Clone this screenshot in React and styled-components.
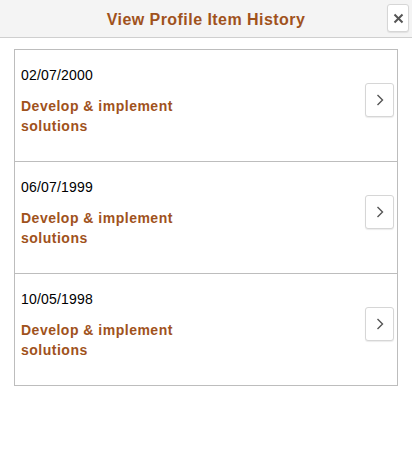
import React from 'react';
import styled, { createGlobalStyle } from 'styled-components';

const GlobalStyle = createGlobalStyle`
  html, body {
    margin: 0;
    padding: 0;
    background: #fff;
    font-family: Arial, "Liberation Sans", sans-serif;
  }
`;

const Page = styled.div`
  width: 412px;
  min-height: 462px;
  background: #fff;
`;

const Header = styled.header`
  position: relative;
  height: 38px;
  padding-top: 2px;
  background: #f4f4f4;
  border-bottom: 1px solid #cfcfcf;
  box-sizing: border-box;
  display: flex;
  align-items: center;
  justify-content: center;
`;

const Title = styled.h1`
  margin: 0;
  font-size: 16px;
  font-weight: bold;
  letter-spacing: 0.45px;
  color: #a0521c;
`;

const CloseButton = styled.button`
  position: absolute;
  top: 4px;
  right: 3px;
  width: 22px;
  height: 28px;
  padding: 0;
  background: #fff;
  border: 1px solid #d6d6d6;
  border-radius: 3px;
  box-shadow: 0 1px 1px rgba(0, 0, 0, 0.08);
  display: flex;
  align-items: center;
  justify-content: center;
`;

const List = styled.ul`
  list-style: none;
  margin: 11px 14px 0;
  padding: 0;
  border: 1px solid #bdbdbd;
`;

const Row = styled.li`
  box-sizing: border-box;
  display: flex;
  justify-content: space-between;
  align-items: flex-start;
  padding: 16px 3px 0 6px;
  border-top: ${p => (p.first ? 'none' : '1px solid #bdbdbd')};
  height: ${p => (p.first ? '111px' : '112px')};
`;

const Info = styled.div`
  width: 185px;
`;

const Date = styled.div`
  font-size: 14px;
  line-height: 18px;
  letter-spacing: 0.2px;
  color: #000;
`;

const ItemName = styled.div`
  margin-top: 12px;
  font-size: 14px;
  line-height: 20px;
  font-weight: bold;
  letter-spacing: 0.5px;
  color: #a0521c;
`;

const ChevronButton = styled.button`
  margin-top: 17px;
  width: 29px;
  height: 34px;
  padding: 0;
  background: #fff;
  border: 1px solid #d6d6d6;
  border-radius: 3px;
  box-shadow: 0 1px 1px rgba(0, 0, 0, 0.08);
  display: flex;
  align-items: center;
  justify-content: center;
`;

const items = [
  { date: '02/07/2000', name: 'Develop & implement solutions' },
  { date: '06/07/1999', name: 'Develop & implement solutions' },
  { date: '10/05/1998', name: 'Develop & implement solutions' },
];

export default function App() {
  return (
    <Page>
      <GlobalStyle />
      <Header>
        <Title>View Profile Item History</Title>
        <CloseButton aria-label="Close">
          <svg width="11" height="11" viewBox="0 0 11 11">
            <path d="M1.5 1.5 L9.5 9.5 M9.5 1.5 L1.5 9.5" stroke="#555" strokeWidth="2" />
          </svg>
        </CloseButton>
      </Header>
      <List>
        {items.map((item, i) => (
          <Row key={item.date} first={i === 0}>
            <Info>
              <Date>{item.date}</Date>
              <ItemName>{item.name}</ItemName>
            </Info>
            <ChevronButton aria-label="Details">
              <svg width="8" height="12" viewBox="0 0 8 12">
                <path d="M1.5 1 L6.5 6 L1.5 11" fill="none" stroke="#555" strokeWidth="1.4" />
              </svg>
            </ChevronButton>
          </Row>
        ))}
      </List>
    </Page>
  );
}
